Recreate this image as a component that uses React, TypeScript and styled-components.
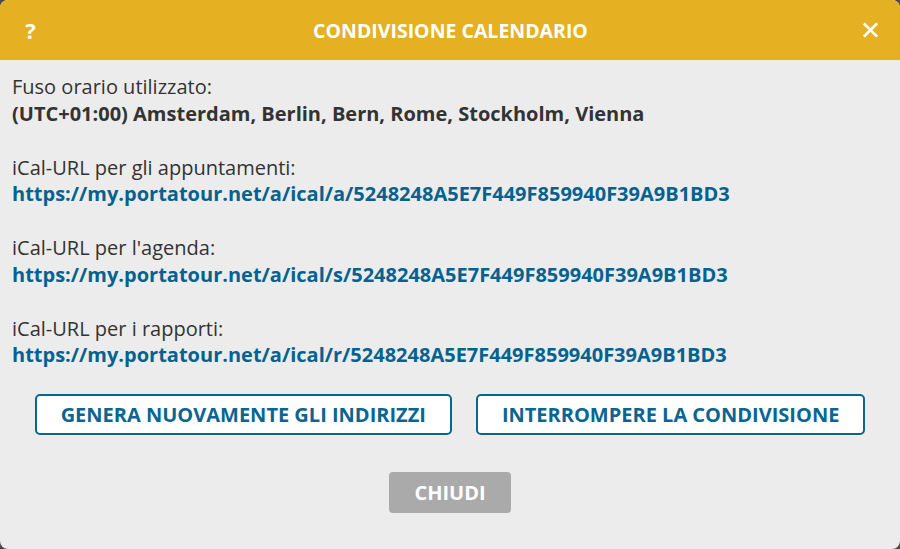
import styled, { createGlobalStyle } from 'styled-components'

const Global = createGlobalStyle`
  html, body {
    margin: 0;
    padding: 0;
    background: #4a4a4a;
  }
  body {
    font-family: 'Open Sans', 'Liberation Sans', sans-serif;
  }
`

const Dialog = styled.div({
  width: '900px',
  height: '549px',
  background: '#ececec',
  borderRadius: '8px',
  overflow: 'hidden',
  display: 'flex',
  flexDirection: 'column'
})

const Header = styled.div({
  height: '60px',
  background: '#e5b022',
  display: 'flex',
  alignItems: 'center',
  justifyContent: 'space-between',
  padding: '0 22px 0 23px',
  color: '#fff'
})

const HeaderIcon = styled.button({
  background: 'none',
  border: 'none',
  padding: 0,
  color: '#fff',
  fontFamily: "'Open Sans', sans-serif",
  fontWeight: 700,
  fontSize: '22px',
  width: '15px',
  display: 'flex',
  alignItems: 'center',
  justifyContent: 'center',
  cursor: 'pointer'
})

const Title = styled.h1({
  margin: 0,
  fontSize: '19.5px',
  fontWeight: 700
})

const Body = styled.div({
  padding: '14px 12px 0',
  display: 'flex',
  flexDirection: 'column',
  gap: '27.5px',
  color: '#333',
  fontSize: '20px',
  lineHeight: '26.5px'
})

const Block = styled.div({
  display: 'flex',
  flexDirection: 'column'
})

const Label = styled.div({})

const Value = styled.div({
  fontWeight: 700
})

const Link = styled.a({
  fontWeight: 700,
  color: '#05628f',
  textDecoration: 'none'
})

const Actions = styled.div({
  display: 'flex',
  justifyContent: 'center',
  gap: '24px',
  marginTop: '25px'
})

const OutlineButton = styled.button({
  height: '41px',
  padding: '0 24px',
  background: '#fff',
  border: '2px solid #0a6592',
  borderRadius: '5px',
  color: '#0a6592',
  fontFamily: "'Open Sans', sans-serif",
  fontWeight: 700,
  fontSize: '20px',
  cursor: 'pointer'
})

const Footer = styled.div({
  display: 'flex',
  justifyContent: 'center',
  marginTop: '37px'
})

const CloseButton = styled.button({
  height: '41px',
  width: '122px',
  background: '#aaaaaa',
  border: 'none',
  borderRadius: '4px',
  color: '#fff',
  fontFamily: "'Open Sans', sans-serif",
  fontWeight: 700,
  fontSize: '20px',
  cursor: 'pointer'
})

const urls = [
  { label: 'iCal-URL per gli appuntamenti:', url: 'https://my.portatour.net/a/ical/a/5248248A5E7F449F859940F39A9B1BD3' },
  { label: "iCal-URL per l'agenda:", url: 'https://my.portatour.net/a/ical/s/5248248A5E7F449F859940F39A9B1BD3' },
  { label: 'iCal-URL per i rapporti:', url: 'https://my.portatour.net/a/ical/r/5248248A5E7F449F859940F39A9B1BD3' }
]

const App = () => {
  return (
    <>
      <Global />
      <Dialog>
        <Header>
          <HeaderIcon>?</HeaderIcon>
          <Title>CONDIVISIONE CALENDARIO</Title>
          <HeaderIcon aria-label='close'>
            <svg width='16' height='16' viewBox='0 0 16 16'>
              <path d='M2 2 L14 14 M14 2 L2 14' stroke='#fff' strokeWidth='3' strokeLinecap='square' />
            </svg>
          </HeaderIcon>
        </Header>
        <Body>
          <Block>
            <Label>Fuso orario utilizzato:</Label>
            <Value>(UTC+01:00) Amsterdam, Berlin, Bern, Rome, Stockholm, Vienna</Value>
          </Block>
          {urls.map((u) => (
            <Block key={u.url}>
              <Label>{u.label}</Label>
              <Link href={u.url}>{u.url}</Link>
            </Block>
          ))}
        </Body>
        <Actions>
          <OutlineButton>GENERA NUOVAMENTE GLI INDIRIZZI</OutlineButton>
          <OutlineButton>INTERROMPERE LA CONDIVISIONE</OutlineButton>
        </Actions>
        <Footer>
          <CloseButton>CHIUDI</CloseButton>
        </Footer>
      </Dialog>
    </>
  )
}

export default App
